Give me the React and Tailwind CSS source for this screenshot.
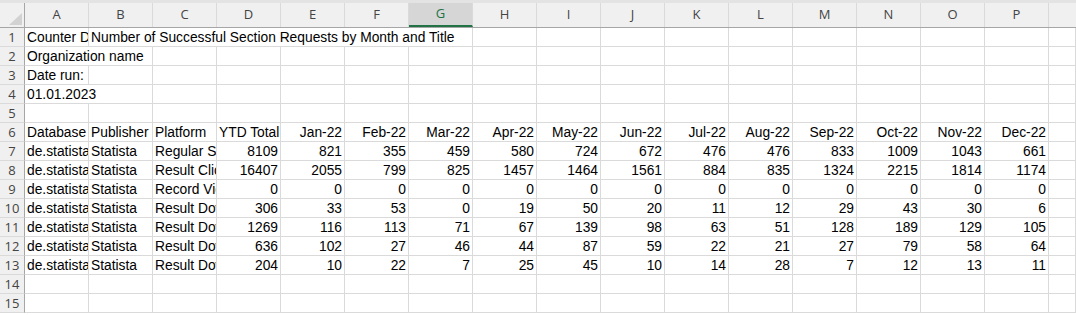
import React from "react";

const COLS = ["A", "B", "C", "D", "E", "F", "G", "H", "I", "J", "K", "L", "M", "N", "O", "P"];
const MONTHS = ["Jan-22", "Feb-22", "Mar-22", "Apr-22", "May-22", "Jun-22", "Jul-22", "Aug-22", "Sep-22", "Oct-22", "Nov-22", "Dec-22"];

const DATA = [
  ["Regular Searches", 8109, 821, 355, 459, 580, 724, 672, 476, 476, 833, 1009, 1043, 661],
  ["Result Clicks", 16407, 2055, 799, 825, 1457, 1464, 1561, 884, 835, 1324, 2215, 1814, 1174],
  ["Record Views", 0, 0, 0, 0, 0, 0, 0, 0, 0, 0, 0, 0, 0],
  ["Result Downloads", 306, 33, 53, 0, 19, 50, 20, 11, 12, 29, 43, 30, 6],
  ["Result Downloads", 1269, 116, 113, 71, 67, 139, 98, 63, 51, 128, 189, 129, 105],
  ["Result Downloads", 636, 102, 27, 46, 44, 87, 59, 22, 21, 27, 79, 58, 64],
  ["Result Downloads", 204, 10, 22, 7, 25, 45, 10, 14, 28, 7, 12, 13, 11],
];

const cellBase = "h-[19px] border-r border-b border-[#dadada] overflow-hidden whitespace-nowrap px-[2px] leading-[19px]";

function Cell({ children, right, span = "" }) {
  return <div className={`${cellBase} ${span} ${right ? "text-right" : "text-left"}`}>{children}</div>;
}

function RowHead({ n }) {
  return (
    <div className="h-[19px] border-r border-b border-r-[#a6a6a6] border-b-[#dadada] bg-[#f0f0f0] text-center text-[13px] leading-[19px] text-[#444] font-['Open_Sans',sans-serif]">
      {n}
    </div>
  );
}

function Row({ n, children }) {
  return (
    <div className="grid grid-cols-[25px_repeat(16,64px)_1fr]">
      <RowHead n={n} />
      {children}
    </div>
  );
}

function Empty({ count }) {
  return Array.from({ length: count }).map((_, i) => <Cell key={i} />);
}

export default function App() {
  return (
    <div className="w-[1076px] h-[315px] overflow-hidden bg-white text-[13.8px] text-black font-['Liberation_Sans',sans-serif]">
      <div className="h-[3px] bg-[#e3e3e3]" />
      <div className="grid grid-cols-[25px_repeat(16,64px)_1fr] h-[25px] bg-[#f0f0f0] border-b border-[#a6a6a6] text-[#444] font-['Open_Sans',sans-serif] text-[13px]">
        <div className="border-r border-[#a6a6a6] flex items-end justify-end pr-[2px] pb-[2px]">
          <svg width="13" height="12" viewBox="0 0 13 12">
            <polygon points="13,0 13,12 0,12" fill="#d2d2d2" />
          </svg>
        </div>
        {COLS.map((c) =>
          c === "G" ? (
            <div key={c} className="flex items-center justify-center bg-[#d6d6d6] border-r border-[#dadada] border-b-2 border-b-[#217346] text-[#217346]">
              {c}
            </div>
          ) : (
            <div key={c} className="flex items-center justify-center border-r border-[#dadada]">
              {c}
            </div>
          )
        )}
        <div />
      </div>

      <Row n={1}>
        <Cell>Counter Database Report</Cell>
        <Cell span="col-span-6">Number of Successful Section Requests by Month and Title</Cell>
        <Empty count={10} />
      </Row>
      <Row n={2}>
        <Cell span="col-span-2">Organization name</Cell>
        <Empty count={15} />
      </Row>
      <Row n={3}>
        <Cell>Date run:</Cell>
        <Empty count={16} />
      </Row>
      <Row n={4}>
        <Cell span="col-span-2">01.01.2023</Cell>
        <Empty count={15} />
      </Row>
      <Row n={5}>
        <Empty count={17} />
      </Row>
      <Row n={6}>
        <Cell>Database</Cell>
        <Cell>Publisher</Cell>
        <Cell>Platform</Cell>
        <Cell>YTD Total</Cell>
        {MONTHS.map((m) => (
          <Cell key={m} right>
            {m}
          </Cell>
        ))}
        <Cell />
      </Row>
      {DATA.map((r, i) => (
        <Row key={i} n={7 + i}>
          <Cell>de.statista.com</Cell>
          <Cell>Statista</Cell>
          <Cell>{r[0]}</Cell>
          {r.slice(1).map((v, j) => (
            <Cell key={j} right>
              {v}
            </Cell>
          ))}
          <Cell />
        </Row>
      ))}
      <Row n={14}>
        <Empty count={17} />
      </Row>
      <Row n={15}>
        <Empty count={17} />
      </Row>
    </div>
  );
}
